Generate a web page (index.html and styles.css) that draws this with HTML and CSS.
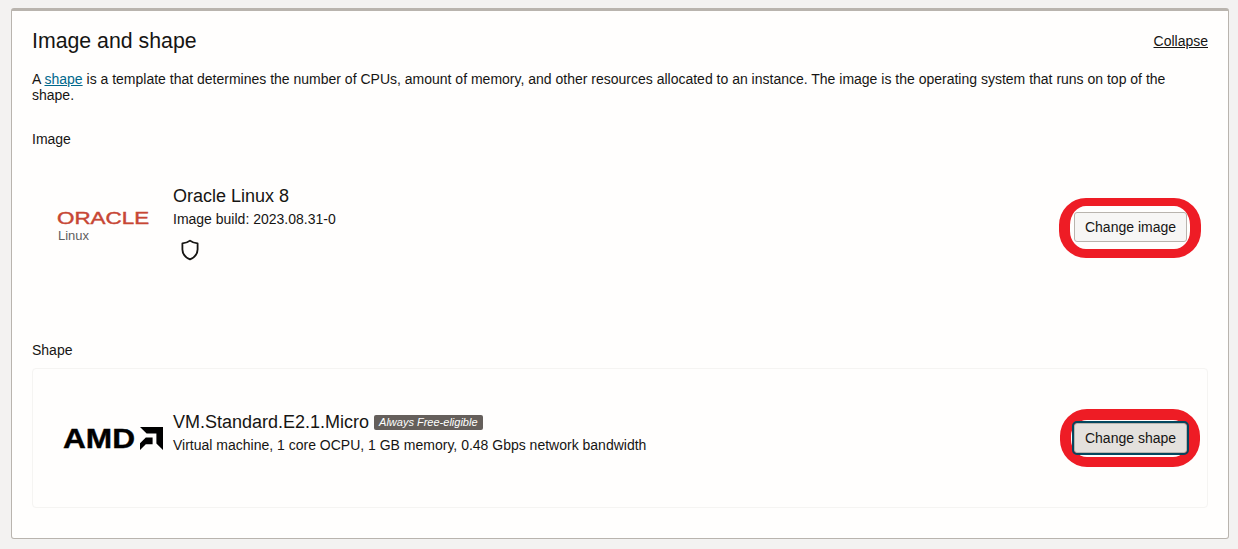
FILE: index.html
```html
<!DOCTYPE html>
<html lang="en">
<head>
    <meta charset="UTF-8">
    <meta name="viewport" content="width=device-width, initial-scale=1.0">
    <title>Image and shape</title>
    <link rel="stylesheet" href="styles.css">
</head>
<body>
    <div class="panel">
        <div class="panel-header">
            <h2>Image and shape</h2>
            <a class="collapse-link" href="#">Collapse</a>
        </div>
        <p class="intro">A <a href="#">shape</a> is a template that determines the number of CPUs, amount of memory, and other resources allocated to an instance. The image is the operating system that runs on top of the shape.</p>

        <div class="field-label image-label">Image</div>
        <div class="item image-item">
            <div class="logo">
                <div class="oracle-logo">
                    <span class="oracle-word">ORACLE</span>
                    <span class="oracle-sub">Linux</span>
                </div>
            </div>
            <div class="item-info">
                <div class="item-title">Oracle Linux 8</div>
                <div class="item-desc">Image build: 2023.08.31-0</div>
                <svg class="shield" width="20" height="22" viewBox="0 0 20 22">
                    <path d="M10 1.6 C12 3.2 14.8 4.2 17.6 4.4 V10.5 C17.6 15 14.6 18.4 10 20.4 C5.4 18.4 2.4 15 2.4 10.5 V4.4 C5.2 4.2 8 3.2 10 1.6 Z" fill="none" stroke="#161513" stroke-width="1.8" stroke-linejoin="round"/>
                </svg>
            </div>
            <div class="ring-wrap">
                <button class="change-btn">Change image</button>
            </div>
        </div>

        <div class="field-label shape-label">Shape</div>
        <div class="item shape-item">
            <div class="logo">
                <div class="amd-logo">
                    <span class="amd-word">AMD</span>
                    <svg width="23" height="23" viewBox="0 0 23 23">
                        <path d="M0 0 H23 V23 L16.4 16.4 V6.6 H6.6 Z" fill="#000"/>
                        <path d="M5.8 10.4 H12.6 V17.2 H5.8 L0 23 V16.2 Z" fill="#000"/>
                    </svg>
                </div>
            </div>
            <div class="item-info">
                <div class="item-title">VM.Standard.E2.1.Micro <span class="badge">Always Free-eligible</span></div>
                <div class="item-desc">Virtual machine, 1 core OCPU, 1 GB memory, 0.48 Gbps network bandwidth</div>
            </div>
            <div class="ring-wrap">
                <button class="change-btn active">Change shape</button>
            </div>
        </div>
    </div>
</body>
</html>
```

FILE: styles.css
```css
* {
    margin: 0;
    padding: 0;
    box-sizing: border-box;
}

html, body {
    height: 100%;
}

body {
    background-color: #f3f2f1;
    font-family: "Liberation Sans", Arial, sans-serif;
    color: #161513;
    padding: 8px 9px 10px 11px;
}

.panel {
    height: 531px;
    background-color: #fffefd;
    border: 1px solid #b9b4ae;
    border-top-width: 3px;
    border-radius: 3px;
    padding: 0 20px;
}

.panel-header {
    display: flex;
    justify-content: space-between;
    align-items: center;
    height: 36px;
    margin-top: 12px;
}

.panel-header h2 {
    font-size: 21.3px;
    font-weight: normal;
    line-height: 36px;
}

.collapse-link {
    font-size: 14px;
    color: #161513;
}

.intro {
    font-size: 14px;
    line-height: 16px;
    margin-top: 12px;
}

.intro a {
    color: #00688c;
}

.field-label {
    font-size: 14px;
    line-height: 16px;
}

.image-label {
    margin-top: 28px;
}

.item {
    display: flex;
    align-items: center;
}

.image-item {
    height: 195px;
    padding-bottom: 45px;
}

.shape-item {
    height: 140px;
    margin-top: 10px;
    border: 1px solid #f5f4f2;
    border-radius: 4px;
}

.logo {
    width: 141px;
    flex-shrink: 0;
}

.shape-item .logo {
    width: 140px;
}

.oracle-logo {
    padding-left: 25px;
    margin-top: 11px;
}

.oracle-word {
    display: block;
    font-size: 16px;
    line-height: 16px;
    color: #c74634;
    -webkit-text-stroke: 0.4px #c74634;
    transform: scaleX(1.4);
    transform-origin: left center;
}

.oracle-sub {
    display: block;
    font-size: 13px;
    line-height: 16px;
    margin-top: 1px;
    padding-left: 1px;
    color: #5f5f5f;
}

.amd-logo {
    display: flex;
    align-items: center;
    padding-left: 30px;
}

.amd-word {
    width: 77px;
    font-size: 28px;
    font-weight: bold;
    line-height: 23px;
    color: #000;
    -webkit-text-stroke: 0.4px #000;
    transform: scaleX(1.13);
    transform-origin: left center;
}

.item-info {
    flex-grow: 1;
}

.shape-item .item-info {
    padding-bottom: 10px;
}

.item-title {
    font-size: 18px;
    line-height: 24px;
}

.item-desc {
    font-size: 14px;
    line-height: 22px;
}

.shield {
    display: block;
    margin: 9px 0 0 7px;
}

.badge {
    display: inline-block;
    vertical-align: 2px;
    background-color: #655f5b;
    color: #fff;
    font-size: 11px;
    font-style: italic;
    line-height: 15px;
    padding: 0 5px;
    border-radius: 2px;
}

.ring-wrap {
    position: relative;
    flex-shrink: 0;
    margin-right: 20px;
}

.image-item .ring-wrap {
    margin-top: 10px;
    margin-right: 21px;
}

.ring-wrap::after {
    content: "";
    position: absolute;
    top: -14px;
    right: -14px;
    bottom: -16px;
    left: -15px;
    border: solid #ee1c25;
    border-width: 8px 11px 9px;
    border-radius: 27px;
}

.shape-item .ring-wrap::after {
    top: -14px;
    right: -13px;
    bottom: -14px;
    left: -14px;
    border-width: 11px 11px 10px;
}

.change-btn {
    position: relative;
    z-index: 1;
    display: block;
    width: 113px;
    height: 30px;
    font-family: inherit;
    font-size: 14px;
    color: #161513;
    background-color: #f7f6f5;
    border: 1px solid #b9b4ae;
    border-radius: 3px;
}

.change-btn.active {
    background-color: #e4e1dd;
    outline: 2px solid #04475e;
}
```
